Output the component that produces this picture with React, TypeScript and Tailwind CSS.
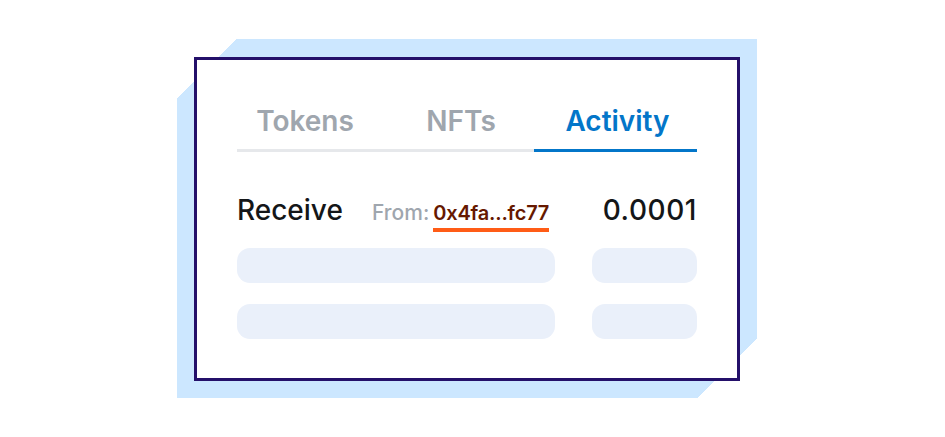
const TABS = [
  { label: "Tokens", active: false, cls: "w-[136px]" },
  { label: "NFTs", active: false, cls: "flex-1 pl-[15px]" },
  { label: "Activity", active: true, cls: "w-[163px] pl-[4px]" },
];

function Skeleton() {
  return (
    <div className="flex justify-between">
      <div className="h-[35px] w-[318px] rounded-[13px] bg-[#eaf0fa]" />
      <div className="h-[35px] w-[105px] rounded-[13px] bg-[#eaf0fa]" />
    </div>
  );
}

export default function App() {
  return (
    <div
      className="h-[437px] w-[945px] bg-white pl-[177px] pt-[39px]"
      style={{ fontFamily: "Inter, 'Noto Sans', sans-serif" }}
    >
      {/* light blue backdrop with two clipped corners */}
      <div className="h-[359px] w-[580px] bg-[linear-gradient(135deg,transparent_42px,#cce7ff_42px,#cce7ff_calc(100%_-_42px),transparent_calc(100%_-_42px))] pl-[17px] pt-[18px]">
        <div className="h-[324px] w-[546px] border-[3px] border-[#24106a] bg-white px-[40px] pt-[43px]">
          {/* tabs */}
          <div className="flex">
            {TABS.map((t) => (
              <div
                key={t.label}
                className={`flex justify-center border-b-[3px] pb-[10px] text-[28px] font-semibold leading-[36px] ${t.cls} ${
                  t.active
                    ? "border-[#0376c9] text-[#0376c9]"
                    : "border-[#e6e8eb] text-[#9fa6ae]"
                }`}
              >
                {t.label}
              </div>
            ))}
          </div>

          {/* activity row */}
          <div className="mt-[42px] flex h-[38px] items-baseline">
            <div className="w-[135px] text-[28px] font-medium leading-[32px] text-[#141618]">
              Receive
            </div>
            <div className="flex items-baseline text-[21px] font-medium leading-[24px]">
              <span className="text-[#9fa6ae]">From:</span>
              <span className="ml-[4px] inline-flex flex-col">
                <span className="text-[20px] font-semibold tracking-[-0.01em] text-[#661800]">
                  0x4fa...fc77
                </span>
                <span className="mt-[3px] h-[4px] bg-[#ff5c16]" />
              </span>
            </div>
            <div className="ml-auto text-[28px] font-medium leading-[32px] tracking-[0.02em] text-[#141618]">
              0.0001
            </div>
          </div>

          <div className="mt-[16px] flex flex-col gap-[21px]">
            <Skeleton />
            <Skeleton />
          </div>
        </div>
      </div>
    </div>
  );
}
